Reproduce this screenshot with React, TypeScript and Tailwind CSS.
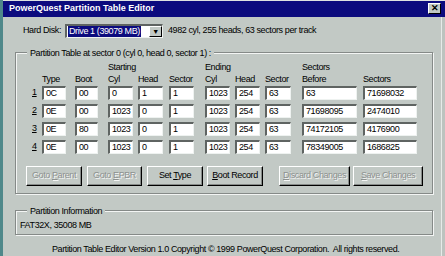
import React from 'react';

const cols = [
  { label: 'Type', track: 'w-[33px]', w: 'w-[24px]' },
  { label: 'Boot', track: 'w-[33px]', w: 'w-[23px]' },
  { label: 'Cyl', track: 'w-[30px]', w: 'w-[25px]' },
  { label: 'Head', track: 'w-[31px]', w: 'w-[25px]' },
  { label: 'Sector', track: 'w-[36px]', w: 'w-[25px]' },
  { label: 'Cyl', track: 'w-[30px]', w: 'w-[25px]' },
  { label: 'Head', track: 'w-[30px]', w: 'w-[25px]' },
  { label: 'Sector', track: 'w-[37px]', w: 'w-[26px]' },
  { label: 'Before', track: 'w-[61px]', w: 'w-[55px]' },
  { label: 'Sectors', track: 'w-[54px]', w: 'w-[54px]' },
];

const rows = [
  ['0C', '00', '0', '1', '1', '1023', '254', '63', '63', '71698032'],
  ['0E', '00', '1023', '0', '1', '1023', '254', '63', '71698095', '2474010'],
  ['0E', '80', '1023', '0', '1', '1023', '254', '63', '74172105', '4176900'],
  ['0E', '00', '1023', '0', '1', '1023', '254', '63', '78349005', '1686825'],
];

const sunken =
  'h-[14px] bg-white border-t-2 border-l-2 border-t-[#5f6462] border-l-[#5f6462] border-b border-r border-b-[#eef2f0] border-r-[#eef2f0] pl-[2px] leading-[11px] text-black';

function Btn({ children, off, w }: { children: React.ReactNode; off?: boolean; w: string }) {
  return (
    <div
      className={`${w} h-[20px] flex items-center justify-center whitespace-nowrap border border-t-white border-l-white border-b-black border-r-black shadow-[inset_-1px_-1px_0_#868a88] ${
        off ? 'text-[#8d918f] [text-shadow:1px_1px_0_#f4f6f5]' : 'text-black'
      }`}
    >
      <span>{children}</span>
    </div>
  );
}

export default function App() {
  return (
    <div className="w-[445px] h-[256px] flex bg-[#c2c9c5] text-[9px] tracking-[-0.4px] text-black font-['Liberation_Sans',Arial,sans-serif] overflow-hidden">
      <div className="w-[3px] bg-[#4f888a]" />
      <div className="flex-1 flex flex-col">
        <div className="h-[1px] bg-[#dfe3e1]" />
        <div className="h-[16px] bg-[#0c0b7e] flex items-center justify-between pl-[6px] pr-[4px]">
          <span className="text-white font-bold text-[9px] tracking-normal">PowerQuest Partition Table Editor</span>
          <div className="w-[13px] h-[11px] bg-[#c2c9c5] border border-t-white border-l-white border-b-black border-r-black flex items-center justify-center text-[9px] font-bold leading-none">
            ✕
          </div>
        </div>

        <div className="flex-1 flex">
          <div className="flex-1 flex flex-col">
            {/* hard disk row */}
            <div className="flex items-center mt-[7px] h-[14px]">
              <span className="ml-[20px] w-[42px]">Hard Disk:</span>
              <div className="w-[98px] h-[14px] flex bg-white border-t-2 border-l-2 border-t-[#5f6462] border-l-[#5f6462] border-b border-r border-b-[#eef2f0] border-r-[#eef2f0]">
                <div className="flex-1 flex items-center pl-[1px]">
                  <span className="bg-[#0c0b7e] text-white px-[1px] leading-[11px]">Drive 1 (39079 MB)</span>
                </div>
                <div className="w-[13px] h-full bg-[#c2c9c5] border border-t-white border-l-white border-b-black border-r-black flex items-center justify-center text-[7px] leading-none">
                  ▼
                </div>
              </div>
              <span className="ml-[5px]">4982 cyl, 255 heads, 63 sectors per track</span>
            </div>

            {/* partition table group */}
            <fieldset className="mt-[10px] ml-[12px] w-[418px] h-[146px] border border-[#858a88] shadow-[inset_1px_1px_0_#f3f5f4,1px_1px_0_#f3f5f4] px-0 pb-0">
              <legend className="ml-[11px] px-[3px] bg-[#c2c9c5] leading-[10px]">
                Partition Table at sector 0 (cyl 0, head 0, sector 1) :
              </legend>
              <div className="ml-[14px] flex mt-[4px] leading-[11px]">
                <div className="w-[12px]" />
                <div className="w-[66px]" />
                <div className="w-[97px]">Starting</div>
                <div className="w-[97px]">Ending</div>
                <div>Sectors</div>
              </div>
              <div className="ml-[14px] flex mt-[1px] leading-[11px]">
                <div className="w-[12px]" />
                {cols.map((c, i) => (
                  <div key={i} className={c.track}>
                    {c.label}
                  </div>
                ))}
              </div>
              <div className="ml-[14px] flex flex-col gap-[4px] mt-[1px]">
                {rows.map((r, ri) => (
                  <div key={ri} className="flex items-center">
                    <div className="w-[12px] pl-[2px]">
                      <span className="underline">{ri + 1}</span>
                    </div>
                    {r.map((v, ci) => (
                      <div key={ci} className={cols[ci].track}>
                        <div className={`${cols[ci].w} ${sunken}`}>{v}</div>
                      </div>
                    ))}
                  </div>
                ))}
              </div>
              <div className="flex ml-[10px] mt-[12px]">
                <Btn off w="w-[56px]">
                  Goto <span className="underline">P</span>arent
                </Btn>
                <div className="w-[5px]" />
                <Btn off w="w-[55px]">
                  Goto <span className="underline">E</span>PBR
                </Btn>
                <div className="w-[5px]" />
                <Btn w="w-[56px]">
                  Set <span className="underline">T</span>ype
                </Btn>
                <div className="w-[4px]" />
                <Btn w="w-[56px]">
                  <span className="underline">B</span>oot Record
                </Btn>
                <div className="w-[16px]" />
                <Btn off w="w-[71px]">
                  <span className="underline">D</span>iscard Changes
                </Btn>
                <div className="w-[3px]" />
                <Btn off w="w-[70px]">
                  <span className="underline">S</span>ave Changes
                </Btn>
              </div>
            </fieldset>

            {/* partition information */}
            <fieldset className="mt-[12px] ml-[12px] w-[418px] h-[29px] border border-[#858a88] shadow-[inset_1px_1px_0_#f3f5f4,1px_1px_0_#f3f5f4] px-0 pb-0">
              <legend className="ml-[11px] px-[3px] bg-[#c2c9c5] leading-[10px]">Partition Information</legend>
              <div className="ml-[4px] mt-[3px]">FAT32X, 35008 MB</div>
            </fieldset>

            <div className="mt-[8px] pl-[49px] whitespace-pre">
              Partition Table Editor Version 1.0 Copyright © 1999 PowerQuest Corporation.  All rights reserved.
            </div>
          </div>
          <div className="w-[4px] border-l border-l-[#e6eae8] bg-[#bcc3bf]" />
        </div>
      </div>
    </div>
  );
}
